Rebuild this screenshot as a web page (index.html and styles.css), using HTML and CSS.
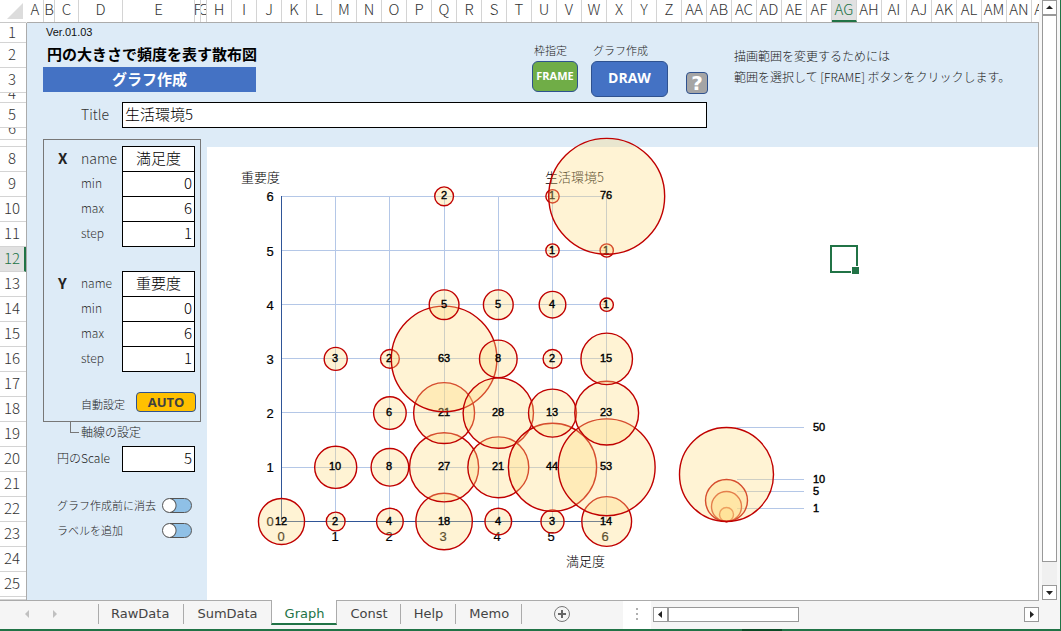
FILE: index.html
```html
<!DOCTYPE html>
<html lang="ja">
<head>
<meta charset="utf-8">
<title>円の大きさで頻度を表す散布図</title>
<link rel="stylesheet" href="styles.css">
</head>
<body>
<div class="app">
  <div class="workspace">
    <div class="sheet">
      <div class="corner"><svg width="27" height="22" viewBox="0 0 27 22"><path d="M23 3V19H7Z" fill="#dcdcdc"/></svg></div>
      <div class="cols">
        <span>A</span><span>B</span><span>C</span><span>D</span><span>E</span><span class="clip">F</span><span class="clip">G</span><span>H</span><span>I</span><span>J</span><span>K</span><span>L</span><span>M</span><span>N</span><span>O</span><span>P</span><span>Q</span><span>R</span><span>S</span><span>T</span><span>U</span><span>V</span><span>W</span><span>X</span><span>Y</span><span>Z</span><span>AA</span><span>AB</span><span>AC</span><span>AD</span><span>AE</span><span>AF</span><span class="current">AG</span><span>AH</span><span>AI</span><span>AJ</span><span>AK</span><span>AL</span><span>AM</span><span>AN</span><span>AO</span>
      </div>
      <div class="rows">
        <span>1</span><span>2</span><span>3</span><span class="clip short">4</span><span>5</span><span class="clip short">6</span><span></span><span>8</span><span>9</span><span>10</span><span>11</span><span class="current">12</span><span>13</span><span>14</span><span>15</span><span>16</span><span>17</span><span>18</span><span>19</span><span>20</span><span>21</span><span>22</span><span>23</span><span>24</span><span>25</span><span></span>
      </div>
      <main class="cells">
        <div class="version">Ver.01.03</div>
        <h1 class="heading">円の大きさで頻度を表す散布図</h1>
        <h2 class="banner">グラフ作成</h2>

        <div class="toolbar">
          <div class="tool"><span class="caption">枠指定</span><button class="btn btn-frame" type="button">FRAME</button></div>
          <div class="tool"><span class="caption">グラフ作成</span><button class="btn btn-draw" type="button">DRAW</button></div>
          <button class="btn btn-help" type="button" aria-label="Help">?</button>
        </div>
        <p class="hint">描画範囲を変更するためには<br>範囲を選択して [FRAME] ボタンをクリックします。</p>

        <label class="label large r5" for="title">Title</label>
        <input class="field title-field" id="title" value="生活環境5">

        <div class="axis-box"></div>
        <b class="axis-name r8">X</b>
        <label class="label large r8" for="x-name">name</label><input class="field center r8" id="x-name" value="満足度">
        <label class="label r9" for="x-min">min</label><input class="field r9" id="x-min" value="0">
        <label class="label r10" for="x-max">max</label><input class="field r10" id="x-max" value="6">
        <label class="label r11" for="x-step">step</label><input class="field r11" id="x-step" value="1">
        <b class="axis-name r13">Y</b>
        <label class="label r13" for="y-name">name</label><input class="field center r13" id="y-name" value="重要度">
        <label class="label r14" for="y-min">min</label><input class="field r14" id="y-min" value="0">
        <label class="label r15" for="y-max">max</label><input class="field r15" id="y-max" value="6">
        <label class="label r16" for="y-step">step</label><input class="field r16" id="y-step" value="1">
        <div class="auto"><span>自動設定</span><button class="btn btn-auto" type="button">AUTO</button></div>
        <div class="connector"></div>
        <div class="axis-caption">軸線の設定</div>
        <label class="label scale-label r20" for="scale">円のScale</label><input class="field r20" id="scale" value="5">
        <label class="switch r22"><span>グラフ作成前に消去</span><input type="checkbox"></label>
        <label class="switch r23"><span>ラベルを追加</span><input type="checkbox"></label>

        <svg class="chart" width="831" height="454" viewBox="207 147 831 454" role="img" aria-label="散布図">
          <g class="grid">
            <path d="M281 196.500H606M281 250.500H606M281 304.500H606M281 358.500H606M281 412.500H606M281 467.500H606"/>
            <path d="M335.500 196V521M389.500 196V521M444.500 196V521M498.500 196V521M552.500 196V521M606.500 196V521"/>
            <path class="axis" d="M281.500 196V521.500H606"/>
            <path d="M737 427.500H804M737 479.500H804M737 491.500H804M737 508.500H804"/>
          </g>
          <g class="caption-text">
            <text x="241" y="182">重要度</text>
            <text x="545" y="182">生活環境5</text>
            <text x="566" y="566">満足度</text>
          </g>
          <g class="ticks">
            <text x="270" y="201">6</text><text x="270" y="256">5</text><text x="270" y="310">4</text><text x="270" y="364">3</text><text x="270" y="418">2</text><text x="270" y="472">1</text><text x="270" y="526">0</text>
            <text x="281" y="541">0</text><text x="335" y="541">1</text><text x="389" y="541">2</text><text x="443" y="541">3</text><text x="497" y="541">4</text><text x="551" y="541">5</text><text x="605" y="541">6</text>
          </g>
          <g class="bubbles" id="bubbles"></g>
          <g class="bubbles">
            <circle cx="726.500" cy="514.500" r="7"/><circle cx="726.500" cy="506.500" r="15"/><circle cx="726.500" cy="500.500" r="21"/><circle cx="726.500" cy="474.500" r="47"/>
          </g>
          <g class="legend">
            <text x="813" y="431">50</text><text x="813" y="483">10</text><text x="813" y="495">5</text><text x="813" y="512">1</text>
          </g>
        </svg>
        <div class="selection"></div>
      </main>
    </div>
    <div class="vscroll">
      <button type="button" aria-label="Up"><svg width="13" height="13" viewBox="0 0 13 13"><path d="M3 8H10L6.500 4.500Z" fill="#222"/></svg></button>
      <div class="vthumb"></div>
      <div class="vtrack"></div>
      <button type="button" aria-label="Down"><svg width="13" height="13" viewBox="0 0 13 13"><path d="M3 5H10L6.500 9Z" fill="#222"/></svg></button>
    </div>
  </div>

  <footer class="bottom">
    <div class="nav">
      <button type="button" aria-label="Previous sheet"><svg width="6" height="8" viewBox="0 0 6 8"><path d="M5 0V8L1 4Z" fill="#c0c0c0"/></svg></button>
      <button type="button" aria-label="Next sheet"><svg width="6" height="8" viewBox="0 0 6 8"><path d="M1 0V8L5 4Z" fill="#c0c0c0"/></svg></button>
    </div>
    <nav class="tabs">
      <button type="button" class="first">RawData</button>
      <button type="button" class="before-active">SumData</button>
      <button type="button" class="active">Graph</button>
      <button type="button">Const</button>
      <button type="button">Help</button>
      <button type="button">Memo</button>
    </nav>
    <button class="add" type="button" aria-label="New sheet"><svg width="18" height="18" viewBox="0 0 18 18" fill="none"><circle cx="9" cy="9" r="7.500" stroke="#777"/><path d="M5 9H13M9 5V13" stroke="#666" stroke-width="2"/></svg></button>
    <div class="splitter"><svg width="3" height="12" viewBox="0 0 3 12" fill="#b0b0b0"><path d="M0 0H2V2H0ZM0 5H2V7H0ZM0 10H2V12H0Z"/></svg></div>
    <div class="hscroll">
      <button type="button" aria-label="Left"><svg width="13" height="13" viewBox="0 0 13 13"><path d="M8 3V10L4 6.500Z" fill="#222"/></svg></button>
      <div class="hthumb"></div>
      <button class="right" type="button" aria-label="Right"><svg width="13" height="13" viewBox="0 0 13 13"><path d="M5 3V10L9 6.500Z" fill="#222"/></svg></button>
    </div>
  </footer>
  <div class="statusline"><div class="marker"></div></div>
</div>
<script src="chart.js"></script>
</body>
</html>
```
FILE: chart.js
```js
// Frequencies by x value; each entry is [y, count], drawn from the bottom up.
const data = [
  [[0, 12]],
  [[0, 2], [1, 10], [3, 3]],
  [[0, 4], [1, 8], [2, 6], [3, 2]],
  [[0, 18], [1, 27], [2, 21], [3, 63], [4, 5], [6, 2]],
  [[0, 4], [1, 21], [2, 28], [3, 8], [4, 5]],
  [[0, 3], [1, 44], [2, 13], [3, 2], [4, 4], [5, 1], [6, 1]],
  [[0, 14], [1, 53], [2, 23], [3, 15], [4, 1], [5, 1], [6, 76]]
];
const NS = "http://www.w3.org/2000/svg";
const group = document.getElementById("bubbles");
data.forEach((column, x) => column.forEach(([y, count]) => {
  const cx = 281.5 + x * 54.2;
  const cy = 521.5 - y * 54.2;
  const circle = document.createElementNS(NS, "circle");
  circle.setAttribute("cx", cx);
  circle.setAttribute("cy", cy);
  circle.setAttribute("r", 6.65 * Math.sqrt(count));
  const text = document.createElementNS(NS, "text");
  text.setAttribute("x", Math.round(cx - 0.6));
  text.setAttribute("y", Math.round(cy + 3));
  text.textContent = count;
  group.append(circle, text);
}));
```
FILE: styles.css
```css
:root {
  --green: #217346;
  --line: #ababab;
  --cols: 17px 11px 24px 44px 72px 6px 6px repeat(34, 25px);
  --rows: 20px 25px 25px 10px 25px 12px 7px repeat(18, 25px) 1fr;
  --jp: "Noto Sans CJK JP", sans-serif;
}
* { box-sizing: border-box; }
body { margin: 0; font-family: var(--jp); color: #222; }
h1, h2, p { margin: 0; }
button, input { font: inherit; margin: 0; padding: 0; }

.app {
  display: flex; flex-direction: column; height: 100vh;
  overflow: hidden; background: #f5f5f5; border-right: 1px solid var(--green);
}
.workspace { display: flex; flex: 1; min-height: 0; }
.sheet {
  flex: 1; min-width: 0; min-height: 0; overflow: hidden; background: #fff;
  display: grid; grid-template: 23px minmax(0, 1fr) / 27px minmax(0, 1fr);
}
.corner { border-bottom: 1px solid #c8c8c8; border-right: 1px solid #fff; }
.corner svg { display: block; }

.cols, .rows { font-size: 15px; font-weight: 300; color: #333; overflow: hidden; }
.cols { display: grid; grid-template-columns: var(--cols); border-bottom: 1px solid var(--line); line-height: 18px; }
.cols span { border-right: 1px solid #d4d4d4; display: flex; justify-content: center; }
.cols .current { background: #e1e1e1; color: var(--green); border-bottom: 2px solid var(--green); }
.rows { display: grid; grid-template-rows: var(--rows); border-right: 1px solid var(--line); line-height: 20px; }
.rows span { border-bottom: 1px solid #d4d4d4; display: flex; align-items: center; justify-content: center; padding: 0 2px 2px 0; }
.rows .short { line-height: 0; align-items: flex-start; padding-bottom: 0; }
.rows .current { background: #e1e1e1; color: var(--green); border-right: 2px solid var(--green); padding-right: 0; }
.clip { overflow: hidden; }

.cells {
  display: grid; grid-template-columns: var(--cols); grid-template-rows: var(--rows);
  background: #ddebf7; border-right: 1px solid var(--line); overflow: hidden; min-width: 0;
}
.version { grid-area: 1 / 2 / 2 / 9; padding-left: 2px; font: 11px/18px "Liberation Sans", sans-serif; color: #111; }
.heading { grid-area: 2 / 2 / 3 / 12; padding-left: 3px; font-size: 15px; line-height: 22px; font-weight: 700; color: #000; white-space: nowrap; }
.banner { grid-area: 3 / 2 / 4 / 10; margin: -1px 1px 1px -1px; background: #4472c4; color: #fff; font-size: 15px; line-height: 24px; font-weight: 700; text-align: center; }

.toolbar { grid-area: 2 / 21 / 6 / 29; display: flex; align-items: flex-start; }
.tool { display: flex; flex-direction: column; align-items: flex-start; margin-right: 13px; }
.caption { padding-left: 2px; font-size: 11px; line-height: 18px; margin-top: -2px; padding-bottom: 2px; font-weight: 300; }
.btn { border: 1px solid #2f528f; border-radius: 6px; color: #fff; font-family: "Open Sans", sans-serif; font-weight: 700; }
.btn-frame { width: 46px; height: 31px; background: #70ad47; font-size: 11px; line-height: 27px; padding-bottom: 2px; }
.btn-draw { width: 77px; height: 36px; background: #4472c4; font-size: 14px; line-height: 32px; padding-bottom: 2px; }
.btn-help { width: 22px; height: 22px; margin: 29px 0 0 5px; border-radius: 4px; background: #a5a5a5; font: 700 20px/18px "DejaVu Sans", sans-serif; }
.hint { grid-area: 2 / 29 / 5 / 42; padding: 2px 0 0 2px; font-size: 12px; line-height: 21px; font-weight: 300; white-space: nowrap; }

.label { grid-column: 4; padding-left: 2px; font-size: 12px; line-height: 22px; white-space: nowrap; color: #333; font-weight: 300; }
.large { font-size: 14px; }
.scale-label { grid-column: 3 / 5; padding-left: 2px; color: #222; }
.axis-name { grid-column: 3; padding-left: 3px; font-size: 15px; line-height: 22px; }
.field {
  grid-column: 5; margin: -1px 0 0 -1px; width: calc(100% + 1px); min-width: 0;
  border: 1px solid #000; border-radius: 0; background: #fff; color: #000;
  font-size: 15px; font-weight: 300; line-height: 22px; text-align: right; padding: 0 2px 2px 0;
}
.center { text-align: center; padding: 0 0 2px; }
.title-field { grid-area: 5 / 5 / 6 / 28; text-align: left; padding: 0 0 2px 2px; }
.axis-box { grid-area: 7 / 2 / 19 / 7; margin: -1px 0 0 -1px; border: 1px solid #777; }
.auto { grid-area: 17 / 4 / 19 / 8; display: flex; align-items: flex-start; padding: 20px 0 0 2px; gap: 11px; font-size: 11px; line-height: 24px; font-weight: 300; }
.btn-auto { width: 60px; height: 20px; border-radius: 4px; background: #ffc000; color: #404040; font-size: 13px; line-height: 16px; }
.connector { grid-area: 19 / 3; justify-self: end; width: 9px; height: 11px; border-left: 1px solid #777; border-bottom: 1px solid #777; }
.axis-caption { grid-area: 19 / 4 / 20 / 8; padding-left: 2px; font-size: 12px; line-height: 20px; font-weight: 300; }
.switch { grid-column: 3 / 6; display: flex; align-items: flex-start; justify-content: space-between; padding: 0 3px 0 2px; font-size: 11px; line-height: 16px; font-weight: 300; white-space: nowrap; }
.switch input {
  appearance: none; width: 30px; height: 15px; margin-top: 1px; border: 1px solid #555; border-radius: 8px;
  background: radial-gradient(circle at 6px 50%, #fff 6px, #555 7px, #8fc0e6 8px);
}
.r5 { grid-row: 5; } .r8 { grid-row: 8; } .r9 { grid-row: 9; } .r10 { grid-row: 10; } .r11 { grid-row: 11; }
.r13 { grid-row: 13; } .r14 { grid-row: 14; } .r15 { grid-row: 15; } .r16 { grid-row: 16; }
.r20 { grid-row: 20; } .r22 { grid-row: 22; } .r23 { grid-row: 23; }

.chart { grid-area: 8 / 8 / -1 / -1; display: block; overflow: visible; background: #fff; }
.grid path { fill: none; stroke: #b4c7e7; }
.grid .axis { stroke: #2f5597; }
.caption-text { font-size: 13px; font-weight: 300; fill: #000; }
.ticks { font: 13px "Liberation Sans", sans-serif; text-anchor: middle; fill: #000; stroke: #000; stroke-width: 0.2; }
.bubbles circle { fill: #ffdc83; fill-opacity: 0.35; stroke: #c00000; stroke-width: 1.4; }
.bubbles text, .legend { font: 11px "Liberation Sans", sans-serif; fill: #000; stroke: #000; stroke-width: 0.4; }
.bubbles text { text-anchor: middle; }
.selection { grid-area: 12 / 33; position: relative; margin: -2px -1px -1px -2px; border: 2px solid var(--green); }
.selection::after { content: ""; position: absolute; right: -4px; bottom: -4px; width: 7px; height: 7px; border: 1px solid #fff; background: var(--green); }

.vscroll { width: 21px; padding: 0 3px; display: flex; flex-direction: column; background: #f8f8f8; }
.vscroll button, .hscroll button { flex: none; width: 15px; height: 15px; border: 1px solid #999; background: #fff; }
.vscroll svg, .hscroll svg { display: block; }
.vthumb { flex: 24; width: 15px; border: 1px solid #999; background: #fff; }
.vtrack { flex: 1; width: 15px; background: #f0f0f0; }

.bottom { display: flex; height: 29px; flex: none; }
.nav { width: 98px; display: flex; align-items: center; gap: 22px; padding: 0 0 2px 24px; border-top: 1px solid var(--line); }
.nav button, .add { border: 0; background: none; display: flex; }
.tabs { --sep: linear-gradient(var(--line), var(--line)); display: flex; font: 13px "DejaVu Sans", sans-serif; }
.tabs button { border: 0; border-top: 1px solid var(--line); background: var(--sep) right 0 top 3px / 1px 20px no-repeat; padding: 0 13px 3px; color: #444; }
.tabs .first { padding-right: 15px; background: var(--sep) left 0 top 3px / 1px 20px no-repeat, var(--sep) right 0 top 3px / 1px 20px no-repeat; }
.tabs .before-active { background: none; }
.tabs .active { height: 25px; border: 1px solid var(--line); border-top: 0; border-bottom: 2px solid var(--green); background: #fff; color: var(--green); padding: 3px 12px 0 13px; }
.add { width: 101px; align-items: center; justify-content: center; padding: 0 21px 2px 0; border-top: 1px solid var(--line); }
.splitter { width: 28px; display: flex; align-items: center; justify-content: center; padding-bottom: 2px; background: #fff; border-top: 1px solid var(--line); }
.hscroll { flex: 1; display: flex; align-items: flex-start; padding: 6px 0 0 2px; margin-right: 21px; border-top: 1px solid var(--line); }
.hthumb { flex: 0 1 131px; height: 15px; border: 1px solid #999; background: #fff; }
.hscroll .right { margin-left: auto; }
.statusline { height: 2px; flex: none; background: var(--green); }
.marker { width: 40px; height: 2px; margin-left: 70%; background: #0b4a25; }
```
